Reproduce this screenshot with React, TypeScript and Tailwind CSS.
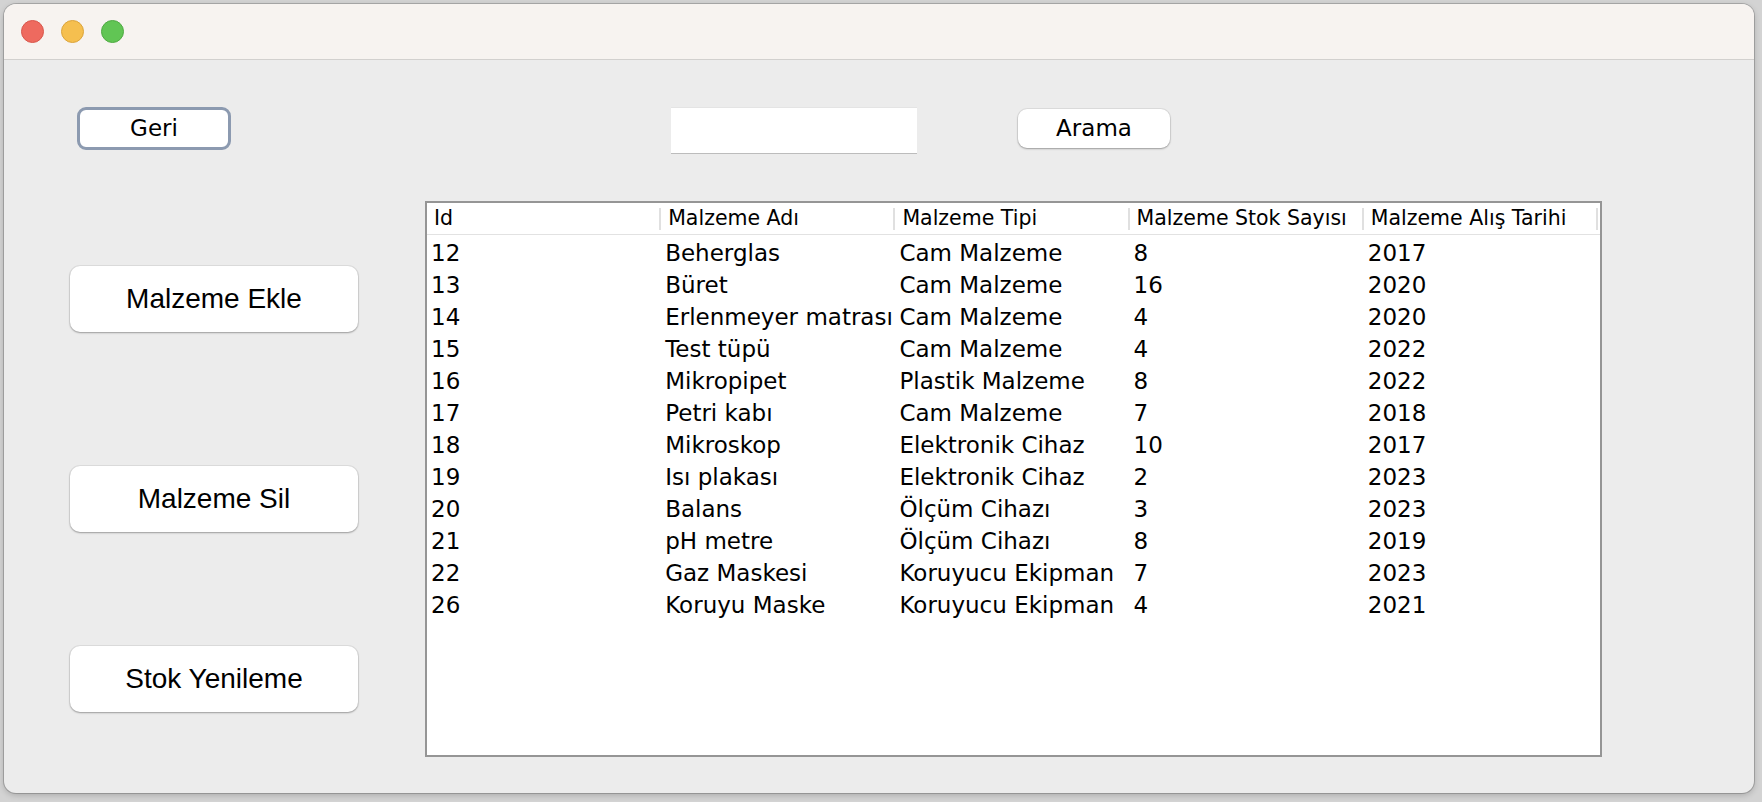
const columns = ['Id', 'Malzeme Adı', 'Malzeme Tipi', 'Malzeme Stok Sayısı', 'Malzeme Alış Tarihi'];

const rows = [
  ['12', 'Beherglas', 'Cam Malzeme', '8', '2017'],
  ['13', 'Büret', 'Cam Malzeme', '16', '2020'],
  ['14', 'Erlenmeyer matrası', 'Cam Malzeme', '4', '2020'],
  ['15', 'Test tüpü', 'Cam Malzeme', '4', '2022'],
  ['16', 'Mikropipet', 'Plastik Malzeme', '8', '2022'],
  ['17', 'Petri kabı', 'Cam Malzeme', '7', '2018'],
  ['18', 'Mikroskop', 'Elektronik Cihaz', '10', '2017'],
  ['19', 'Isı plakası', 'Elektronik Cihaz', '2', '2023'],
  ['20', 'Balans', 'Ölçüm Cihazı', '3', '2023'],
  ['21', 'pH metre', 'Ölçüm Cihazı', '8', '2019'],
  ['22', 'Gaz Maskesi', 'Koruyucu Ekipman', '7', '2023'],
  ['26', 'Koruyu Maske', 'Koruyucu Ekipman', '4', '2021'],
];

const sideButtons = [
  { label: 'Malzeme Ekle', mt: 'mt-[113px]' },
  { label: 'Malzeme Sil', mt: 'mt-[134px]' },
  { label: 'Stok Yenileme', mt: 'mt-[114px]' },
];

export default function App() {
  return (
    <div className="w-[1762px] h-[802px] overflow-hidden bg-[#d3d3d3] pl-[4px] pt-[4px]">
      {/* Window */}
      <div className="w-[1750px] h-[789px] rounded-[12px] overflow-hidden flex flex-col bg-[#ececec] shadow-[0_0_0_1px_rgba(0,0,0,0.18),0_2px_6px_rgba(0,0,0,0.2)]">
        {/* Title bar */}
        <div className="h-[56px] shrink-0 bg-[#f7f3f0] border-b border-[#d2d0ce] flex items-center pl-[17px] gap-[17px]">
          <div className="w-[23px] h-[23px] rounded-full bg-[#ee6a5f] border border-[#d9564b]" />
          <div className="w-[23px] h-[23px] rounded-full bg-[#f5bf4f] border border-[#dca43a]" />
          <div className="w-[23px] h-[23px] rounded-full bg-[#61c554] border border-[#4faa42]" />
        </div>

        {/* Content */}
        <div className="flex-1 pt-[47px] font-['DejaVu_Sans',sans-serif] text-black">
          {/* Top row */}
          <div className="flex items-start h-[46px]">
            <button className="ml-[73px] w-[154px] h-[43px] rounded-[9px] bg-white border-[3px] border-[#8c9ab0] text-[23px] leading-none">
              Geri
            </button>
            <div className="ml-[440px] w-[246px] h-[46px] bg-white border-t border-[#e4e4e4] shadow-[0_1px_0_#bcbcbc]" />
            <button className="ml-[101px] mt-[2px] w-[152px] h-[39px] rounded-[9px] bg-white text-[23px] leading-none shadow-[0_0_0_1px_rgba(0,0,0,0.06),0_1px_2px_rgba(0,0,0,0.3)]">
              Arama
            </button>
          </div>

          {/* Main row */}
          <div className="flex items-start">
            <div className="ml-[66px] w-[288px] flex flex-col">
              {sideButtons.map((b) => (
                <button
                  key={b.label}
                  className={`${b.mt} w-[288px] h-[66px] rounded-[10px] bg-white font-['Liberation_Sans',sans-serif] text-[28px] leading-none shadow-[0_0_0_1px_rgba(0,0,0,0.06),0_1px_2px_rgba(0,0,0,0.3)]`}
                >
                  {b.label}
                </button>
              ))}
            </div>

            {/* Table */}
            <div className="ml-[67px] mt-[48px] w-[1177px] h-[556px] bg-white border-2 border-[#959595]">
              <div className="grid grid-cols-5 h-[32px] border-b border-[#e2e2e2] pr-[2px]">
                {columns.map((c) => (
                  <div key={c} className="flex items-center justify-between">
                    <span className="pl-[7px] text-[20.5px] leading-none">{c}</span>
                    <div className="w-[2px] h-[22px] bg-[#e0e0e0]" />
                  </div>
                ))}
              </div>
              <div className="pt-[2px]">
                {rows.map((r) => (
                  <div key={r[0]} className="grid grid-cols-5 h-[32px] pr-[2px]">
                    {r.map((cell, i) => (
                      <div key={i} className="flex items-center pl-[4px] text-[23px] leading-none whitespace-nowrap">
                        {cell}
                      </div>
                    ))}
                  </div>
                ))}
              </div>
            </div>
          </div>
        </div>
      </div>
    </div>
  );
}
